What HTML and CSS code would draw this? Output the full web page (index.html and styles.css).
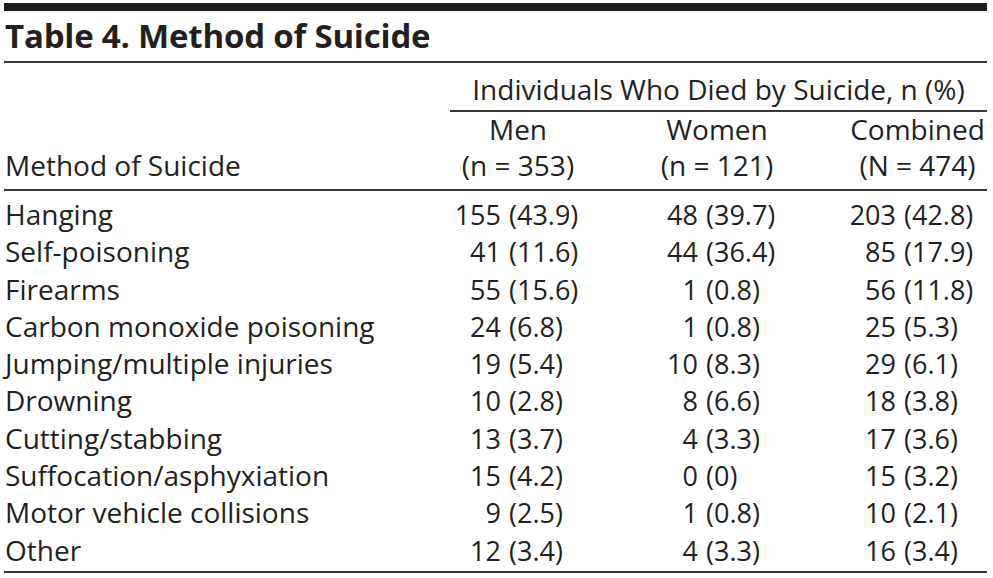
FILE: index.html
```html
<!DOCTYPE html>
<html lang="en">
<head>
<meta charset="utf-8">
<title>Table 4. Method of Suicide</title>
<link rel="stylesheet" href="styles.css">
</head>
<body>
<div class="page">
  <div class="topbar"></div>
  <h1 class="title">Table 4. Method of Suicide</h1>
  <div class="tbl">
    <div class="spanner">Individuals Who Died by Suicide, n (%)</div>
    <div class="stubhead">Method of Suicide</div>
    <div class="colhead">Men<br>(n = 353)</div>
    <div class="colhead">Women<br>(n = 121)</div>
    <div class="colhead">Combined<br>(N = 474)</div>
    <div class="rule mid"></div>

    <div class="label">Hanging</div>
    <div class="num c1"><span class="n">155</span><span class="p">(43.9)</span></div>
    <div class="num c2"><span class="n">48</span><span class="p">(39.7)</span></div>
    <div class="num c3"><span class="n">203</span><span class="p">(42.8)</span></div>

    <div class="label">Self-poisoning</div>
    <div class="num c1"><span class="n">41</span><span class="p">(11.6)</span></div>
    <div class="num c2"><span class="n">44</span><span class="p">(36.4)</span></div>
    <div class="num c3"><span class="n">85</span><span class="p">(17.9)</span></div>

    <div class="label">Firearms</div>
    <div class="num c1"><span class="n">55</span><span class="p">(15.6)</span></div>
    <div class="num c2"><span class="n">1</span><span class="p">(0.8)</span></div>
    <div class="num c3"><span class="n">56</span><span class="p">(11.8)</span></div>

    <div class="label">Carbon monoxide poisoning</div>
    <div class="num c1"><span class="n">24</span><span class="p">(6.8)</span></div>
    <div class="num c2"><span class="n">1</span><span class="p">(0.8)</span></div>
    <div class="num c3"><span class="n">25</span><span class="p">(5.3)</span></div>

    <div class="label">Jumping/multiple injuries</div>
    <div class="num c1"><span class="n">19</span><span class="p">(5.4)</span></div>
    <div class="num c2"><span class="n">10</span><span class="p">(8.3)</span></div>
    <div class="num c3"><span class="n">29</span><span class="p">(6.1)</span></div>

    <div class="label">Drowning</div>
    <div class="num c1"><span class="n">10</span><span class="p">(2.8)</span></div>
    <div class="num c2"><span class="n">8</span><span class="p">(6.6)</span></div>
    <div class="num c3"><span class="n">18</span><span class="p">(3.8)</span></div>

    <div class="label">Cutting/stabbing</div>
    <div class="num c1"><span class="n">13</span><span class="p">(3.7)</span></div>
    <div class="num c2"><span class="n">4</span><span class="p">(3.3)</span></div>
    <div class="num c3"><span class="n">17</span><span class="p">(3.6)</span></div>

    <div class="label">Suffocation/asphyxiation</div>
    <div class="num c1"><span class="n">15</span><span class="p">(4.2)</span></div>
    <div class="num c2"><span class="n">0</span><span class="p">(0)</span></div>
    <div class="num c3"><span class="n">15</span><span class="p">(3.2)</span></div>

    <div class="label">Motor vehicle collisions</div>
    <div class="num c1"><span class="n">9</span><span class="p">(2.5)</span></div>
    <div class="num c2"><span class="n">1</span><span class="p">(0.8)</span></div>
    <div class="num c3"><span class="n">10</span><span class="p">(2.1)</span></div>

    <div class="label">Other</div>
    <div class="num c1"><span class="n">12</span><span class="p">(3.4)</span></div>
    <div class="num c2"><span class="n">4</span><span class="p">(3.3)</span></div>
    <div class="num c3"><span class="n">16</span><span class="p">(3.4)</span></div>

    <div class="rule bottom"></div>
  </div>
</div>
</body>
</html>
```

FILE: styles.css
```css
html, body {
  margin: 0;
  padding: 0;
  background: #ffffff;
}

body {
  font-family: "Open Sans", "Noto Sans", "Liberation Sans", sans-serif;
  color: #231f20;
  font-size: 28px;
}

.page {
  width: 983px;
  padding: 3px 0 0 4px;
}

.topbar {
  height: 8px;
  background: #1f1c1d;
}

.title {
  margin: 7px 0 0 0;
  padding: 0 0 7px 1px;
  font-size: 33px;
  line-height: 36px;
  font-weight: 700;
  letter-spacing: -0.2px;
  border-bottom: 2px solid #3a3738;
}

.tbl {
  display: grid;
  grid-template-columns: 383px 136px 136px 139px;
  column-gap: 63px;
}

.spanner {
  grid-column: 2 / 5;
  grid-row: 1;
  margin-top: 8px;
  padding-bottom: 2px;
  line-height: 37px;
  text-align: center;
  white-space: nowrap;
  border-bottom: 2px solid #3a3738;
}

.stubhead {
  grid-column: 1;
  grid-row: 2;
  align-self: end;
  line-height: 35.5px;
  padding-left: 1px;
  white-space: nowrap;
}

.colhead {
  grid-row: 2;
  line-height: 35.5px;
  text-align: center;
  white-space: nowrap;
}

.rule {
  grid-column: 1 / -1;
  height: 2px;
  background: #3a3738;
}

.rule.mid {
  margin-top: 6px;
  margin-bottom: 5px;
}

.rule.bottom {
  margin-top: 2px;
}

.label {
  grid-column: 1;
  line-height: 37.3px;
  padding-left: 1px;
  white-space: nowrap;
}

.num {
  display: flex;
  justify-content: flex-end;
  font-size: 27px;
  line-height: 37.3px;
  white-space: nowrap;
}

.num.c1 { padding-right: 7px; }
.num.c2 { padding-right: 9px; }
.num.c3 { padding-right: 13px; }

.n {
  text-align: right;
  margin-right: 8px;
}

.p {
  width: 70px;
  text-align: left;
}
```
